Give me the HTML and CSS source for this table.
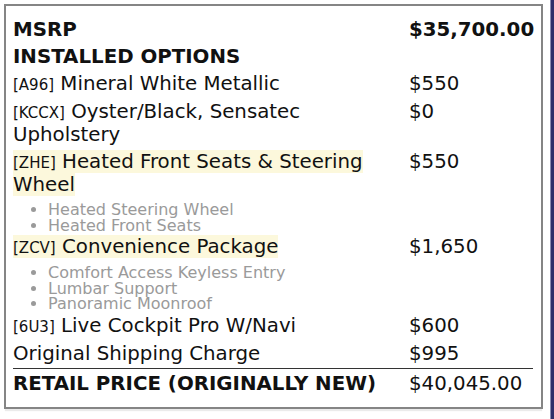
FILE: index.html
```html
<!DOCTYPE html>
<html lang="en">
<head>
  <meta charset="UTF-8">
  <title>Window Sticker</title>
  <link rel="stylesheet" href="styles.css">
</head>
<body>
  <div class="page">
    <div class="sticker">
      <table class="price-table">
        <tr class="head-row">
          <td class="label">MSRP</td>
          <td class="price">$35,700.00</td>
        </tr>
        <tr class="head-row">
          <td class="label" colspan="2">INSTALLED OPTIONS</td>
        </tr>
        <tr>
          <td class="label"><span class="code">[A96]</span> Mineral White Metallic</td>
          <td class="price">$550</td>
        </tr>
        <tr>
          <td class="label"><span class="code">[KCCX]</span> Oyster/Black, Sensatec Upholstery</td>
          <td class="price">$0</td>
        </tr>
        <tr>
          <td class="label">
            <span class="mark"><span class="code">[ZHE]</span> Heated Front Seats &amp; Steering Wheel</span>
            <ul class="sub-items">
              <li>Heated Steering Wheel</li>
              <li>Heated Front Seats</li>
            </ul>
          </td>
          <td class="price">$550</td>
        </tr>
        <tr>
          <td class="label">
            <span class="mark"><span class="code">[ZCV]</span> Convenience Package</span>
            <ul class="sub-items">
              <li>Comfort Access Keyless Entry</li>
              <li>Lumbar Support</li>
              <li>Panoramic Moonroof</li>
            </ul>
          </td>
          <td class="price">$1,650</td>
        </tr>
        <tr>
          <td class="label"><span class="code">[6U3]</span> Live Cockpit Pro W/Navi</td>
          <td class="price">$600</td>
        </tr>
        <tr>
          <td class="label">Original Shipping Charge</td>
          <td class="price">$995</td>
        </tr>
        <tr class="total-row">
          <td class="label">RETAIL PRICE (ORIGINALLY NEW)</td>
          <td class="price">$40,045.00</td>
        </tr>
      </table>
    </div>
    <div class="edge"></div>
  </div>
</body>
</html>
```

FILE: styles.css
```css
body {
  margin: 0;
  background: #fff;
  font-family: "DejaVu Sans", sans-serif;
  color: #111;
}

.page {
  display: flex;
  height: 419px;
}

.sticker {
  width: 539px;
  height: 405px;
  margin: 4px 0 0 4px;
  border: 2px solid #858585;
  padding: 11px 7px 0 7px;
  box-sizing: border-box;
  box-shadow: 0 3px 1px -1px rgba(0, 0, 0, 0.08);
}

.edge {
  width: 3px;
  margin-left: auto;
  background: #2e2e6a;
  border-left: 1px solid #8a8ab0;
}

.price-table {
  width: 520px;
  table-layout: fixed;
  border-collapse: collapse;
  font-size: 19.8px;
  line-height: 22px;
}

.price-table td {
  padding: 2px 0 3px 0;
  vertical-align: top;
}

.label {
  width: 396px;
  padding-right: 10px;
}

.price {
  white-space: nowrap;
}

.head-row td {
  font-weight: bold;
}

.code {
  font-size: 15px;
}

.mark {
  background: #fcf8dc;
}

.sub-items {
  margin: 6px 0 -2px 0;
  padding-left: 35px;
  font-size: 16px;
  line-height: 15.5px;
  color: #9a9a9a;
}

.total-row td {
  border-top: 1px solid #333;
  font-weight: bold;
  padding-top: 4px;
}

.total-row .price {
  font-weight: normal;
}
```
